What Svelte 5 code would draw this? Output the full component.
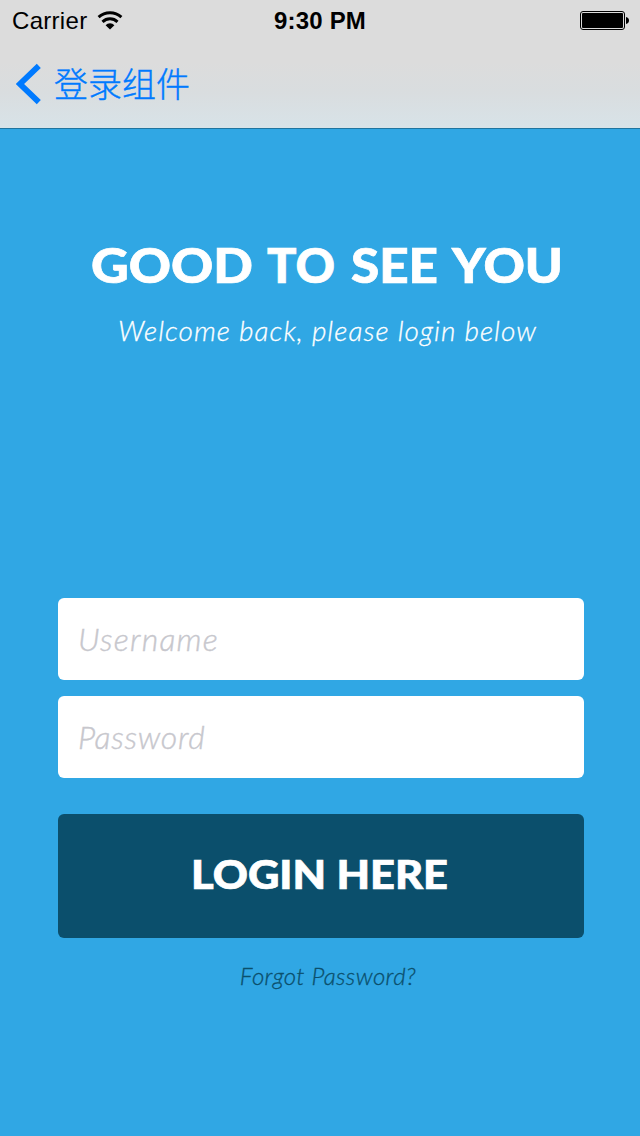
<script>
  let username = $state('');
  let password = $state('');
</script>

<div class="screen">
  <header>
    <div class="status">
      <div class="carrier">
        <span>Carrier</span>
        <svg class="wifi" width="26" height="20" viewBox="0 0 26 20">
          <g fill="none" stroke="#000" stroke-width="3">
            <path d="M1.6 6.2A17 17 0 0 1 24.4 6.2" />
            <path d="M5.5 10.8A11 11 0 0 1 20.5 10.8" />
          </g>
          <path d="M8.6 14.2A6 6 0 0 1 17.4 14.2L13 18.6Z" />
        </svg>
      </div>
      <span class="time">9:30 PM</span>
      <svg class="battery" width="50" height="20" viewBox="0 0 50 20">
        <rect x="0.5" y="0.5" width="44" height="18" rx="2.5" fill="none" stroke="#000" />
        <rect x="2" y="2" width="41" height="15" rx="1" />
        <path d="M46 6Q49 6.6 49 9.5T46 13Z" />
      </svg>
    </div>
    <nav>
      <svg class="chevron" width="26" height="42" viewBox="0 0 26 42">
        <path d="M22.8 2.8L4 21L22.8 39.2" fill="none" stroke="#007aff" stroke-width="5.8" />
      </svg>
      <span class="back">登录组件</span>
    </nav>
  </header>

  <main>
    <h1>
      <svg width="500" height="70">
        <text x="14" y="48" textLength="162" lengthAdjust="spacingAndGlyphs">GOOD</text>
        <text x="190" y="48" textLength="68" lengthAdjust="spacingAndGlyphs">TO</text>
        <text x="274" y="48" textLength="87" lengthAdjust="spacingAndGlyphs">SEE</text>
        <text x="375" y="48" textLength="111" lengthAdjust="spacingAndGlyphs">YOU</text>
      </svg>
    </h1>
    <p class="welcome">Welcome back, please login below</p>
    <form onsubmit={(e) => e.preventDefault()}>
      <input class="user" placeholder="Username" bind:value={username} />
      <input class="pass" type="password" placeholder="Password" bind:value={password} />
      <button type="submit"><svg width="300" height="70"><text x="21" y="48" textLength="257" lengthAdjust="spacingAndGlyphs">LOGIN HERE</text></svg></button>
    </form>
    <span class="forgot">Forgot Password?</span>
  </main>
</div>

<style>
  :global(body) { margin: 0; }
  .screen {
    width: 640px;
    height: 1136px;
    overflow: hidden;
    background: #30a7e4;
    font-family: Lato, sans-serif;
  }
  header {
    box-sizing: border-box;
    height: 129px;
    border-bottom: 1px solid #20759f;
    background: linear-gradient(#dcdcdc 0, #dcdcdc 62px, #d9dddf 92px, #d8e3e8 128px);
  }
  .status {
    display: grid;
    grid-template-columns: 1fr auto 1fr;
    height: 42px;
    padding: 0 10px 0 12px;
    align-items: center;
    font: 24px/42px "Liberation Sans", sans-serif;
    color: #000;
  }
  .carrier { display: flex; align-items: center; gap: 10px; letter-spacing: 0.3px; }
  .time { font-weight: bold; margin-right: 2px; letter-spacing: 0.2px; }
  .battery { justify-self: end; }
  nav { display: flex; align-items: center; height: 84px; padding-left: 16px; }
  .back {
    margin: -2px 0 0 12px;
    font: 300 34px/44px "Noto Sans CJK SC", sans-serif;
    color: #007aff;
    -webkit-text-stroke: 0.4px #007aff;
  }
  main { display: flex; flex-direction: column; align-items: center; }
  h1 { margin: 106px 0 0 14px; height: 59px; font-size: 47px; }
  h1 svg, button svg { display: block; }
  text { font-family: Lato, sans-serif; font-weight: 900; fill: #fff; stroke: #fff; stroke-width: 0.7px; }
  .welcome {
    margin: 17px 0 0 15px;
    font-size: 28px;
    font-weight: 300;
    font-style: italic;
    line-height: 38px;
    letter-spacing: 1.04px;
    color: #fff;
    -webkit-text-stroke: 0.3px #fff;
    white-space: nowrap;
  }
  form { display: flex; flex-direction: column; width: 526px; margin: 249px 0 0 2px; }
  input {
    box-sizing: border-box;
    height: 82px;
    margin: 0 0 16px;
    padding: 0 20px 2px;
    border: 0;
    border-radius: 6px;
    outline: 0;
    background: #fff;
    font: italic 300 32px Lato, sans-serif;
    color: #0b4f6c;
  }
  input::placeholder { color: #c7c7cd; opacity: 1; -webkit-text-stroke: 0.4px #c7c7cd; }
  .user { letter-spacing: 1.2px; }
  .pass { letter-spacing: 0.7px; }
  button {
    display: flex;
    justify-content: center;
    align-items: center;
    height: 124px;
    margin-top: 20px;
    padding: 0 2px 0 0;
    border: 0;
    border-radius: 6px;
    background: #0b4f6c;
    font-size: 40px;
  }
  .forgot {
    margin: 23px 0 0 16px;
    font-size: 24px;
    font-style: italic;
    font-weight: 300;
    line-height: 30px;
    letter-spacing: 0.4px;
    color: #0b4f6c;
    -webkit-text-stroke: 0.3px #0b4f6c;
  }
</style>
